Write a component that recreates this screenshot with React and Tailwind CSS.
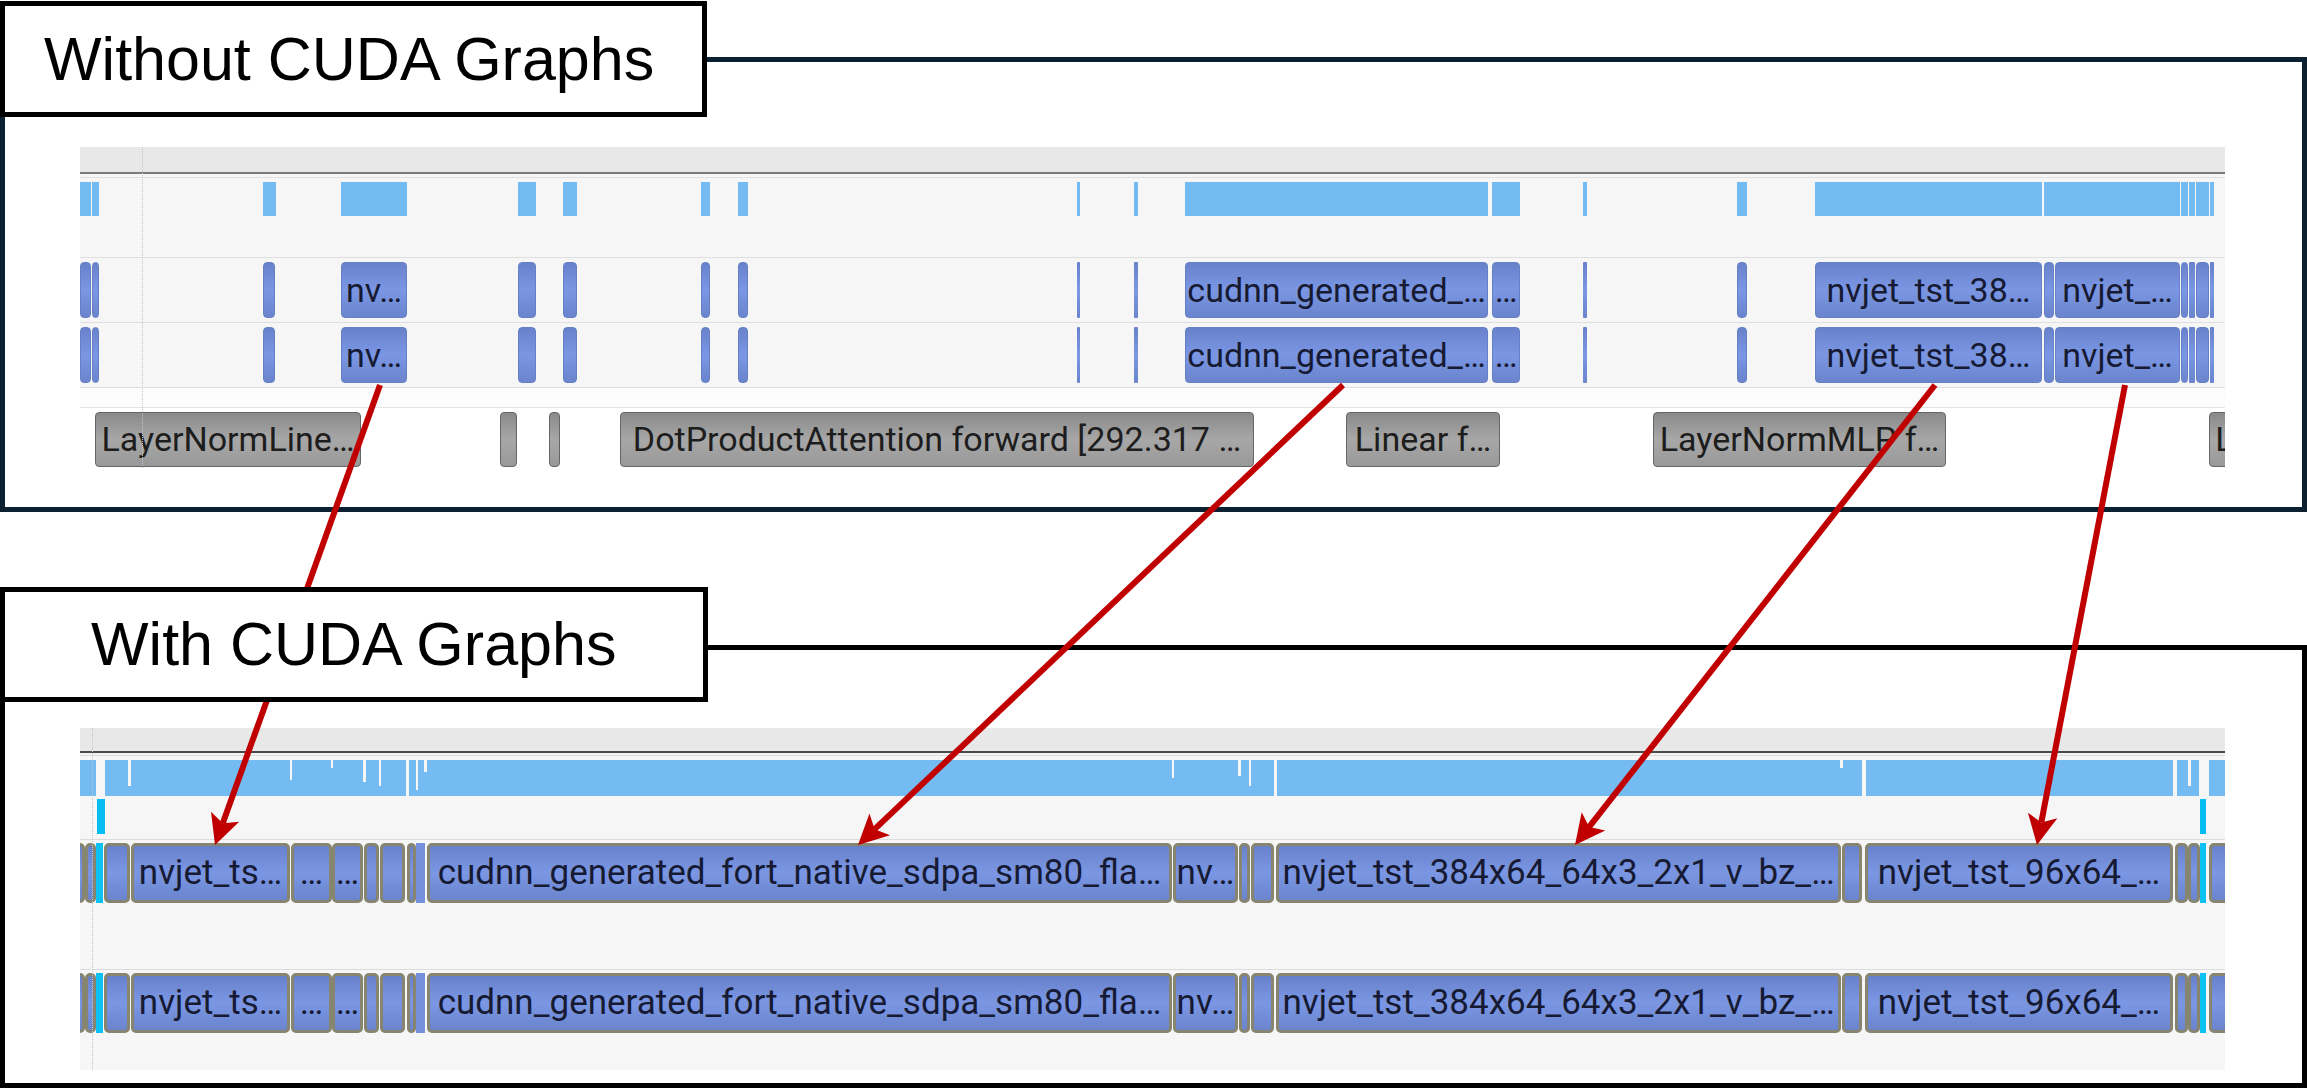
import React from 'react';
import clsx from 'clsx';

// timeline x positions are page pixels; panels start at x=80
const ORIGIN = 80;

const topKernels = [
  [80, 91], [92, 99], [263, 275], [341, 407, 'nv…'], [518, 536], [563, 577],
  [701, 710], [738, 748], [1077, 1080], [1134, 1138],
  [1185, 1488, 'cudnn_generated_…'], [1492, 1520, '…'], [1583, 1587], [1737, 1747],
  [1815, 2042, 'nvjet_tst_38…'], [2044, 2054], [2055, 2180, 'nvjet_…'],
  [2181, 2188], [2189, 2195], [2196, 2209], [2210, 2214],
];

const topUsage = [
  [80, 91], [92, 99], [263, 276], [341, 407], [518, 536], [563, 577], [701, 710],
  [738, 748], [1077, 1080], [1134, 1138], [1185, 1488], [1492, 1520], [1583, 1587],
  [1737, 1747], [1815, 2042], [2044, 2180], [2181, 2188], [2189, 2195], [2196, 2209], [2210, 2214],
];

const nvtx = [
  [95, 361, 'LayerNormLine…'], [500, 517], [549, 560],
  [620, 1254, 'DotProductAttention forward [292.317 …'], [1346, 1500, 'Linear f…'],
  [1653, 1946, 'LayerNormMLP f…'], [2209, 2240, 'L'],
];

const graphKernels = [
  [70, 85], [85, 96], [96, 103, null, 'cyan'], [104, 130], [131, 290, 'nvjet_ts…'],
  [291, 332, '…'], [332, 363, '…'], [364, 379], [380, 405], [407, 416], [416, 425, null, 'plain'],
  [427, 1172, 'cudnn_generated_fort_native_sdpa_sm80_fla…'], [1173, 1238, 'nv…'],
  [1239, 1250], [1251, 1274], [1276, 1841, 'nvjet_tst_384x64_64x3_2x1_v_bz_…'],
  [1842, 1862], [1865, 2173, 'nvjet_tst_96x64_…'], [2175, 2188], [2188, 2200],
  [2200, 2206, null, 'cyan'], [2209, 2240],
];

// white notches in the dense usage chart: [x, width, depth]
const graphNotches = [
  [96, 9, 36], [128, 3, 26], [290, 2, 20], [331, 2, 8], [363, 3, 22], [379, 2, 26],
  [406, 3, 36], [416, 2, 30], [424, 3, 12], [1172, 2, 18], [1238, 3, 16], [1249, 2, 26],
  [1274, 3, 36], [1840, 3, 8], [1862, 4, 36], [2173, 4, 36], [2188, 3, 26], [2199, 10, 36],
];

const arrows = [
  [380, 385, 215, 845],
  [1343, 385, 858, 845],
  [1935, 385, 1575, 845],
  [2125, 385, 2037, 845],
];

const Kernel = ({ x0, x1, label, kind, framed }) => {
  const w = x1 - x0;
  return (
    <div
      className={clsx(
        'absolute inset-y-0 flex items-center justify-center-safe overflow-hidden whitespace-nowrap text-[#161b33]',
        kind === 'cyan' && 'bg-[#0cc2f3]',
        kind === 'plain' && 'bg-[#7590dc]',
        !kind && 'bg-linear-to-b from-[#6881cb] via-[#7b97e4] to-[#6a84cd]',
        !kind && framed && 'rounded-[5px] border-[3px] border-[#87846f] text-[35px]',
        !kind && !framed && (w > 6 ? 'rounded-[4px] border border-[#6680c6] text-[34px]' : 'rounded-[1px]'),
      )}
      style={{ left: x0 - ORIGIN, width: w }}
    >
      {label}
    </div>
  );
};

const Range = ({ x0, x1, label }) => (
  <div
    className="absolute inset-y-0 flex items-center justify-center-safe overflow-hidden whitespace-nowrap rounded-[4px] border border-[#666] bg-linear-to-b from-[#8a8a8a] via-[#a7a7a7] to-[#999] text-[34px] text-[#1d1d1d]"
    style={{ left: x0 - ORIGIN, width: x1 - x0 }}
  >
    {label}
  </div>
);

const DottedGuide = ({ x }) => (
  <div
    className="absolute inset-y-0 w-0 border-l border-dotted border-[#c4c4c4]"
    style={{ left: x - ORIGIN }}
  />
);

const TopPanel = () => (
  <div className="relative flex h-[321px] w-[2145px] flex-col overflow-hidden bg-[#f6f6f6] font-['Roboto',sans-serif]">
    <div className="h-[25px] bg-[#e8e8e8]" />
    <div className="h-[2px] bg-[#7b7b7b]" />
    <div className="h-[4px] border-b border-[#e0e0e0]" />
    <div className="h-[79px] pt-[4px]">
      <svg width="2145" height="34" className="block">
        {topUsage.map(([a, b]) => (
          <rect key={a} x={a - ORIGIN} y="0" width={b - a} height="34" fill="#74bbf1" />
        ))}
      </svg>
    </div>
    <div className="h-[1px] bg-[#dfdfdf]" />
    {[0, 1].map((r) => (
      <React.Fragment key={r}>
        <div className="h-[64px] pt-[4px]">
          <div className="relative h-[56px]">
            {topKernels.map(([a, b, label]) => (
              <Kernel key={a} x0={a} x1={b} label={label} />
            ))}
          </div>
        </div>
        <div className="h-[1px] bg-[#dfdfdf]" />
      </React.Fragment>
    ))}
    <div className="h-[19px] bg-[#fcfcfc]" />
    <div className="h-[1px] bg-[#e4e4e4]" />
    <div className="h-[60px] bg-white pt-[4px]">
      <div className="relative h-[55px]">
        {nvtx.map(([a, b, label]) => (
          <Range key={a} x0={a} x1={b} label={label} />
        ))}
      </div>
    </div>
    <DottedGuide x={142} />
  </div>
);

const BottomPanel = () => (
  <div className="relative flex h-[342px] w-[2145px] flex-col overflow-hidden bg-[#f6f6f6] font-['Roboto',sans-serif]">
    <div className="h-[23px] bg-[#e8e8e8]" />
    <div className="h-[2px] bg-[#4a4a4a]" />
    <div className="h-[3px] border-b border-[#dcdcdc] bg-[#f2f2f2]" />
    <div className="relative h-[83px] pt-[4px]">
      <svg width="2145" height="36" className="block">
        <rect x="0" y="0" width="2145" height="36" fill="#74bbf1" />
        {graphNotches.map(([x, w, d]) => (
          <rect key={x} x={x - ORIGIN} y="0" width={w} height={d} fill="#f6f6f6" />
        ))}
      </svg>
      <div className="absolute top-[43px] left-[17px] h-[35px] w-[8px] bg-[#06bdf3]" />
      <div className="absolute top-[43px] left-[2120px] h-[35px] w-[6px] bg-[#06bdf3]" />
    </div>
    <div className="h-[1px] bg-[#dcdcdc]" />
    <div className="h-[129px] pt-[3px]">
      <div className="relative h-[60px]">
        {graphKernels.map(([a, b, label, kind]) => (
          <Kernel key={a} x0={a} x1={b} label={label} kind={kind} framed />
        ))}
      </div>
    </div>
    <div className="h-[1px] bg-[#dcdcdc]" />
    <div className="h-[100px] pt-[3px]">
      <div className="relative h-[60px]">
        {graphKernels.map(([a, b, label, kind]) => (
          <Kernel key={a} x0={a} x1={b} label={label} kind={kind} framed />
        ))}
      </div>
    </div>
    <DottedGuide x={92} />
  </div>
);

const arrowHead = (x1, y1, x2, y2) => {
  const len = Math.hypot(x2 - x1, y2 - y1);
  const ux = (x2 - x1) / len;
  const uy = (y2 - y1) / len;
  const L = 30;
  const W = 15;
  const bx = x2 - ux * L;
  const by = y2 - uy * L;
  const nx = -uy;
  const ny = ux;
  const mx = x2 - ux * (L - 7);
  const my = y2 - uy * (L - 7);
  return {
    points: `${x2},${y2} ${bx + nx * W},${by + ny * W} ${mx},${my} ${bx - nx * W},${by - ny * W}`,
    end: [mx, my],
  };
};

const Arrows = () => (
  <svg className="pointer-events-none absolute inset-0 z-10" width="2307" height="1088">
    {arrows.map(([x1, y1, x2, y2]) => {
      const h = arrowHead(x1, y1, x2, y2);
      return (
        <g key={x1}>
          <line x1={x1} y1={y1} x2={h.end[0]} y2={h.end[1]} stroke="#c00000" strokeWidth="6" />
          <polygon points={h.points} fill="#c00000" />
        </g>
      );
    })}
  </svg>
);

const TitleBox = ({ children, className }) => (
  <div
    className={clsx(
      'absolute left-0 z-20 flex items-center border-[5px] border-black bg-white font-["Liberation_Sans",Arial,sans-serif] text-[61px] leading-none text-black',
      className,
    )}
  >
    {children}
  </div>
);

export default function App() {
  return (
    <div className="relative h-[1088px] w-[2307px] overflow-hidden bg-white">
      <div className="pt-[57px]">
        <div className="h-[455px] border-[5px] border-[#0b2131] pt-[85px] pl-[75px]">
          <TopPanel />
        </div>
      </div>
      <div className="mt-[133px] h-[443px] border-[5px] border-black pt-[78px] pl-[75px]">
        <BottomPanel />
      </div>
      <Arrows />
      <TitleBox className="top-[1px] h-[116px] w-[707px] pl-[39px]">Without CUDA Graphs</TitleBox>
      <TitleBox className="top-[587px] h-[115px] w-[708px] pl-[86px]">With CUDA Graphs</TitleBox>
    </div>
  );
}
